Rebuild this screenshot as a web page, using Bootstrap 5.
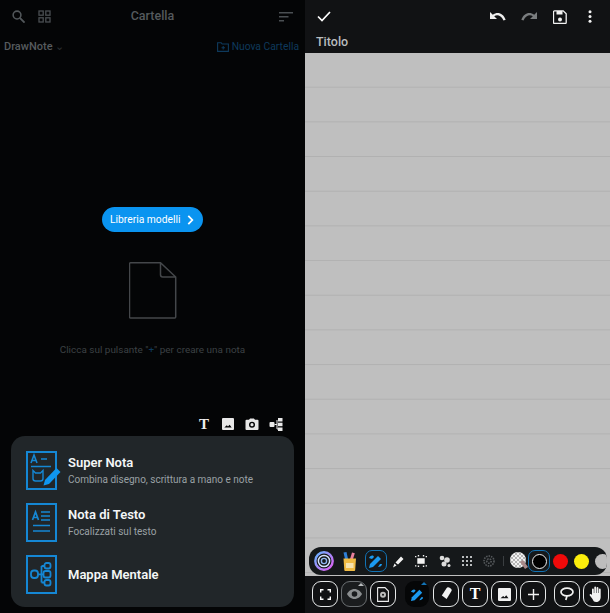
<!DOCTYPE html>
<html lang="it">
<head>
    <meta charset="UTF-8">
    <meta name="viewport" content="width=device-width, initial-scale=1.0">
    <title>DrawNote</title>
    <link href="https://cdn.jsdelivr.net/npm/bootstrap@5.3.3/dist/css/bootstrap.min.css" rel="stylesheet">
    <script src="https://cdn.jsdelivr.net/npm/bootstrap@5.3.3/dist/js/bootstrap.bundle.min.js"></script>
    <style>
        html, body { height: 613px; overflow: hidden; background: #040506; }
        body { font-family: Roboto, "Liberation Sans", sans-serif; }
        svg { display: block; flex: none; }

        .app { width: 610px; height: 613px; }
        .pane { width: 305px; height: 613px; }

        /* left: note list, dimmed */
        .list-pane { background: #040506; }
        .list-head { height: 33px; padding: 0 12px; }
        .list-side { flex: 1 1 0; gap: 13px; }
        .list-title { font-size: 12.5px; font-weight: 500; color: #555a5d; }
        .list-sub { height: 22px; padding: 0 6px 0 4px; margin-top: 3px; font-size: 10.3px; }
        .crumb { color: #565b5e; font-weight: 500; font-size: 11px; }
        .crumb-arrow { color: #2c3033; }
        .new-folder { color: #0e3a5c; gap: 3px; }
        .empty-box { flex: 1 1 auto; padding-top: 149px; }
        .templates-btn { width: 101px; height: 25px; border-radius: 13px; background: #0a94f0; color: #fff; font-size: 10.3px; border: 0; padding: 0 0 0 8px; gap: 6px; }
        .doc-icon { margin-top: 30px; }
        .hint { margin-top: 24px; font-size: 9.95px; color: #3c4144; height: 14px; }
        .hint b { color: #0e3a5c; font-weight: 400; }
        .quick-row { height: 24px; padding-right: 21px; gap: 8px; }
        .quick-t { width: 16px; font: 700 15px/16px "Liberation Serif", serif; color: #eee; text-align: center; }
        .new-card { margin: 0 11px 6px; height: 171px; background: #212629; border-radius: 14px; padding: 16px 0 0 15px; }
        .new-item { height: 38px; margin-bottom: 14px; gap: 6px; color: #fff; }
        .new-name { font-size: 13px; font-weight: 600; line-height: 16px; color: #f4f6f7; }
        .new-desc { font-size: 10px; line-height: 14px; margin-top: 2px; color: #9aa1a5; }

        /* right: canvas */
        .edit-pane { background: #111214; }
        .edit-head { height: 33px; padding: 0 18px 0 12px; }
        .edit-actions { gap: 15px; }
        .save-icon { margin-left: 1px; }
        .more-icon { margin-left: 6px; }
        .edit-title { height: 20px; padding-left: 11px; font-size: 12.5px; font-weight: 500; line-height: 18px; color: #b9bcbe; }
        .paper { flex: 1 1 auto; background-color: #bfbfbf; background-image: linear-gradient(to bottom, #bfbfbf 34px, #b1b1b1 34px, #b1b1b1 35px, #bfbfbf 35px); background-size: 100% 34.68px; padding: 0 3px 1px 4px; }
        .tool-pill { height: 28px; background: #15181a; border-radius: 12px; overflow: hidden; padding-left: 4px; }
        .slot { width: 22px; height: 22px; flex: none; }
        .slot-on { border: 1px solid #1273b5; border-radius: 7px; }
        .slot-target { margin-right: 3px; }
        .slot-cup { margin-right: 5px; }
        .slot-bump1 { margin-left: 1px; }
        .slot-bump2 { margin-left: 2px; }
        .slot-palette { margin: 0 -2px 0 1px; }
        .swatch-slot { width: 21px; flex: none; }
        .swatch { width: 15px; height: 15px; border-radius: 50%; flex: none; }
        .swatch-black { background: #000; border: 1.5px solid #eee; }
        .swatch-red { background: #f00a0a; }
        .swatch-yellow { background: #fcee0c; }
        .swatch-grey { background: #bdbdbd; }
        .sep { width: 1px; height: 10px; margin: 0 3px; background: #3a3e41; flex: none; }
        .bottom-bar { height: 37px; padding: 5px 0 0 7px; gap: 3px; }
        .key { position: relative; width: 26px; height: 26px; flex: none; border: 1px solid #e6e8e9; border-radius: 9px; background: #111214; }
        .key-dim { border-color: #6b6f72; background: #1a1c1e; }
        .key-on { border: 0; background: #050607; width: 24px; margin: 0 1px 0 6px; }
        .key-more::after { content: ""; position: absolute; top: 1px; right: 2px; border-left: 3px solid transparent; border-right: 3px solid transparent; border-bottom: 3px solid #b9bcbe; }
        .key-on.key-more::after { border-bottom-color: #1273b5; }
        .key-t { font: 700 16px/16px "Liberation Serif", serif; color: #fff; }
        .key-gap { margin-left: 5px; }
    </style>
</head>
<body>

<div class="app d-flex">

    <!-- note list -->
    <div class="pane list-pane d-flex flex-column">
        <div class="list-head d-flex align-items-center">
            <div class="list-side d-flex align-items-center">
                <svg width="13" height="13" viewBox="0 0 15 15" fill="none" stroke="#52575a" stroke-width="1.800"><circle cx="5.800" cy="5.800" r="4.500"/><path d="M9 9l5.500 5.500" stroke-width="2.200"/></svg>
                <svg width="13" height="13" viewBox="0 0 13 13" fill="none" stroke="#4a4f52" stroke-width="1.300"><rect x="1" y="1" width="4.200" height="4.200"/><rect x="7.800" y="1" width="4.200" height="4.200"/><rect x="1" y="7.800" width="4.200" height="4.200"/><rect x="7.800" y="7.800" width="4.200" height="4.200"/></svg>
            </div>
            <div class="list-title text-center">Cartella</div>
            <div class="list-side d-flex justify-content-end">
                <svg width="14" height="10" viewBox="0 0 14 10" fill="#4a4f52"><rect width="14" height="1.500"/><rect y="4" width="9.500" height="1.500"/><rect y="8" width="5" height="1.500"/></svg>
            </div>
        </div>
        <div class="list-sub d-flex align-items-center justify-content-between">
            <span class="crumb">DrawNote <span class="crumb-arrow">&#8964;</span></span>
            <span class="new-folder d-flex align-items-center">
                <svg width="12" height="10" viewBox="0 0 12 10" fill="none" stroke="#0e3a5c" stroke-width="1.100"><path d="M.6.800h3.600l1 1.200h6.200v7.400H.6zM4.500 5.700h3.500M6.200 4v3.400"/></svg>
                Nuova Cartella
            </span>
        </div>

        <div class="empty-box d-flex flex-column align-items-center">
            <button type="button" class="templates-btn d-flex align-items-center">
                Libreria modelli
                <svg width="7" height="10" viewBox="0 0 7 10" fill="none" stroke="#fff" stroke-width="1.800"><path d="M1.300 .8l4 4.200-4 4.200"/></svg>
            </button>
            <svg class="doc-icon" width="48" height="57" viewBox="0 0 48 57" fill="none" stroke="#44474a" stroke-width="1.500"><path d="M1.500.8h30L46.700 15v40a1 1 0 0 1-1 1H1.500a1 1 0 0 1-1-1V1.800a1 1 0 0 1 1-1zM31.500 .8v12a2.200 2.200 0 0 0 2.200 2.200h13"/></svg>
            <div class="hint">Clicca sul pulsante "<b>+</b>" per creare una nota</div>
        </div>

        <div class="quick-row d-flex align-items-center justify-content-end">
            <span class="quick-t">T</span>
            <svg width="16" height="12" viewBox="0 0 12 12" fill="#e8e8e8"><path d="M1 0h10a1 1 0 0 1 1 1v10a1 1 0 0 1-1 1H1a1 1 0 0 1-1-1V1a1 1 0 0 1 1-1zM2.300 9.500h7.400L7.600 6.800 6 8.600 4.800 7.300z" fill-rule="evenodd"/></svg>
            <svg width="16" height="12" viewBox="0 0 13 12" fill="#e8e8e8"><path d="M1 1.800h2.500L4.600 .4h3.800l1.100 1.400H12a1 1 0 0 1 1 1V11a1 1 0 0 1-1 1H1a1 1 0 0 1-1-1V2.800a1 1 0 0 1 1-1zM6.500 3.700a3 3 0 1 0 0 6 3 3 0 0 0 0-6zm0 1.400a1.600 1.600 0 1 1 0 3.200 1.600 1.600 0 0 1 0-3.200z" fill-rule="evenodd"/></svg>
            <svg width="16" height="13" viewBox="0 0 13 13" fill="#e8e8e8"><rect x="0" y="4" width="5" height="5" rx="1"/><rect x="8.500" y="0" width="4.500" height="3.500"/><rect x="8.500" y="4.700" width="4.500" height="3.500"/><rect x="8.500" y="9.500" width="4.500" height="3.500"/><path d="M5 6.500h2.500M7.500 2v9h1" stroke="#e8e8e8" fill="none"/></svg>
        </div>

        <div class="new-card">
            <div class="new-item d-flex align-items-center">
                <svg width="36" height="40" viewBox="0 0 36 40" fill="none" stroke="#1587d4"><rect x="1" y="1" width="29" height="37" stroke-width="2"/><path d="M5 12l3-8 3 8M6 9.500h4M15 8h6M5 15.500h20" stroke-width="1.600"/><path d="M7 19.500l2.500 2.500h5l2.500-2.500v8a2.500 2.500 0 0 1-2.500 2.500h-5A2.500 2.500 0 0 1 7 27.500z" stroke-width="1.400"/><path d="M19 29l11.500-12 4 4L23 33l-5.500 1.500z" fill="#0f96f0" stroke="none"/></svg>
                <div>
                    <div class="new-name">Super Nota</div>
                    <div class="new-desc">Combina disegno, scrittura a mano e note</div>
                </div>
            </div>
            <div class="new-item d-flex align-items-center">
                <svg width="36" height="40" viewBox="0 0 36 40" fill="none" stroke="#1587d4"><rect x="1" y="1" width="29" height="37" stroke-width="2"/><path d="M6.500 17l3-8 3 8M7.500 14.500h4M15 9h9M15 13h9M15 17h9M7 22.500h17M7 28h17" stroke-width="1.700"/></svg>
                <div>
                    <div class="new-name">Nota di Testo</div>
                    <div class="new-desc">Focalizzati sul testo</div>
                </div>
            </div>
            <div class="new-item d-flex align-items-center">
                <svg width="36" height="40" viewBox="0 0 36 40" fill="none" stroke="#1587d4"><rect x="1" y="1" width="29" height="37" stroke-width="2"/><g stroke-width="1.800"><rect x="5" y="15.500" width="7" height="7.500" rx="3"/><rect x="18.500" y="8" width="6" height="5.500" rx="2"/><rect x="17.500" y="16" width="7" height="6.500" rx="2"/><rect x="18.500" y="25" width="6" height="5.500" rx="2"/><path d="M12 19.300h5.500M15.500 11h3M15.500 27.500h3M15.500 11v16.500"/></g></svg>
                <div class="new-name">Mappa Mentale</div>
            </div>
        </div>
    </div>

    <!-- canvas -->
    <div class="pane edit-pane d-flex flex-column">
        <div class="edit-head d-flex align-items-center justify-content-between">
            <svg width="14" height="11" viewBox="0 0 14 11" fill="none" stroke="#fff" stroke-width="1.700"><path d="M1 5.500l4 4 8-8.500"/></svg>
            <div class="edit-actions d-flex align-items-center">
                <svg width="16" height="9" viewBox="0 0 16 9" fill="#eee"><path d="M0 0v7h7L4.200 4.300C6.800 2.400 11 3 13.500 8.500l2.200-.8C13 .4 7 -.6 2.800 2.800z"/></svg>
                <svg width="16" height="9" viewBox="0 0 16 9" fill="#7a7d7f"><path d="M16 0v7H9l2.800-2.700C9.200 2.400 5 3 2.500 8.500L.3 7.700C3 .4 9-.6 13.200 2.800z"/></svg>
                <svg class="save-icon" width="14" height="14" viewBox="0 0 14 14" fill="none"><path d="M1.500.8h8.700l3 3v8.700a1 1 0 0 1-1 1H1.500a1 1 0 0 1-1-1V1.800a1 1 0 0 1 1-1z" stroke="#f2f2f2" stroke-width="1.300"/><rect x="3.500" y="1" width="6" height="3.500" fill="#f2f2f2"/><circle cx="7" cy="9.500" r="2" fill="#f2f2f2"/></svg>
                <svg class="more-icon" width="4" height="13" viewBox="0 0 4 13" fill="#f2f2f2"><circle cx="2" cy="1.800" r="1.500"/><circle cx="2" cy="6.500" r="1.500"/><circle cx="2" cy="11.200" r="1.500"/></svg>
            </div>
        </div>
        <div class="edit-title">Titolo</div>

        <div class="paper d-flex flex-column justify-content-end">
            <div class="tool-pill d-flex align-items-center">
                <span class="slot slot-target"><svg width="22" height="22" viewBox="0 0 22 22" fill="none"><defs><linearGradient id="ringGrad" x1="0" y1="0" x2="1" y2="1"><stop offset="0" stop-color="#62b4ff"/><stop offset="1" stop-color="#e45cf0"/></linearGradient></defs><circle cx="11" cy="11" r="8.700" stroke="url(#ringGrad)" stroke-width="2.400"/><circle cx="11" cy="11" r="5.600" stroke="#d4e2fb" stroke-width="1.500"/><circle cx="11" cy="11" r="2.600" stroke="#8fb4ee" stroke-width="1.400"/></svg></span>
                <span class="slot slot-cup"><svg width="22" height="22" viewBox="0 0 22 22"><path d="M7 9L5.500 2.500 8.500 2l1.500 7z" fill="#2f7fd6"/><path d="M12 9l2-6.500 2.800.8L15 9z" fill="#e87f9c"/><path d="M5.500 8.500h12.500l-.8 11.500a1 1 0 0 1-1 1H7.300a1 1 0 0 1-1-1z" fill="#f0bb45"/><rect x="8" y="13" width="7.500" height="5" fill="#f6e3b0"/></svg></span>
                <span class="slot slot-on d-flex align-items-center justify-content-center"><svg width="16" height="16" viewBox="0 0 16 16" fill="#1b9af0"><path d="M2 11l8-8 3 3-8 8-4 1z"/><path d="M1 5c2-3 4-3 5-1l-2 2zM10 14c2 0 4-1 4-3l-2 0z"/></svg></span>
                <span class="slot d-flex align-items-center justify-content-center"><svg width="12" height="13" viewBox="0 0 12 13" fill="#f2f2f2"><path d="M3.500 7.500L9 1.500l2.500 2.500-5.500 5.500zM2.500 8.500l2 2-3.500 2z"/></svg></span>
                <span class="slot slot-bump1 d-flex align-items-center justify-content-center"><svg width="12" height="12" viewBox="0 0 13 13" fill="#f2f2f2"><rect x="2.500" y="3.500" width="8" height="6"/><path d="M0 1h1.500v1.500H0zM3 0h1.500v1.500H3zM8.500 0H10v1.500H8.500zM11.500 1H13v1.500h-1.500zM0 11h1.500v1.500H0zM3 11.500h1.500V13H3zM8.500 11.500H10V13H8.500zM11.500 11H13v1.500h-1.500z"/></svg></span>
                <span class="slot slot-bump2 d-flex align-items-center justify-content-center"><svg width="12" height="13" viewBox="0 0 12 13" fill="#dcdcdc"><circle cx="3" cy="3" r="2.300"/><circle cx="8" cy="5" r="2.800"/><circle cx="5" cy="9" r="2.500"/><circle cx="10" cy="10.500" r="1.500"/></svg></span>
                <span class="slot d-flex align-items-center justify-content-center"><svg width="10" height="10" viewBox="0 0 10 10" fill="#b9bcbe"><path d="M0 0h2v2H0zM4 0h2v2H4zM8 0h2v2H8zM0 4h2v2H0zM4 4h2v2H4zM8 4h2v2H8zM0 8h2v2H0zM4 8h2v2H4zM8 8h2v2H8z"/></svg></span>
                <span class="slot d-flex align-items-center justify-content-center"><svg width="12" height="12" viewBox="0 0 12 12" fill="none" stroke="#55595c" stroke-width="1.600" stroke-dasharray="1.500 1"><circle cx="6" cy="6" r="5"/><circle cx="6" cy="6" r="2.200"/></svg></span>
                <span class="sep"></span>
                <span class="slot slot-palette d-flex align-items-center justify-content-center"><svg width="20" height="20" viewBox="0 0 20 20"><defs><pattern id="chk" width="4" height="4" patternUnits="userSpaceOnUse"><rect width="4" height="4" fill="#f2f2f2"/><rect width="2" height="2" fill="#b5b5b5"/><rect x="2" y="2" width="2" height="2" fill="#b5b5b5"/></pattern></defs><circle cx="9" cy="9" r="8" fill="url(#chk)"/><path d="M11 11l5 7 3-2-5-7z" fill="#a8898a"/></svg></span>
                <span class="slot slot-on d-flex align-items-center justify-content-center"><span class="swatch swatch-black"></span></span>
                <span class="swatch-slot d-flex justify-content-center"><span class="swatch swatch-red"></span></span>
                <span class="swatch-slot d-flex justify-content-center"><span class="swatch swatch-yellow"></span></span>
                <span class="swatch-slot d-flex justify-content-center"><span class="swatch swatch-grey"></span></span>
            </div>
        </div>

        <div class="bottom-bar d-flex">
            <div class="key d-flex align-items-center justify-content-center"><svg width="11" height="11" viewBox="0 0 11 11" fill="none" stroke="#fff" stroke-width="1.400"><path d="M.7 3.500V.7h2.800M7.500 .7h2.800v2.800M.7 7.500v2.800h2.800M10.300 7.500v2.800H7.500"/></svg></div>
            <div class="key key-dim key-more d-flex align-items-center justify-content-center"><svg width="15" height="10" viewBox="0 0 15 10" fill="#8b8e90"><path d="M7.500 0C11 0 13.700 2.500 15 5c-1.300 2.500-4 5-7.500 5S1.300 7.500 0 5c1.300-2.500 4-5 7.500-5zm0 2.200a2.800 2.800 0 1 0 0 5.600 2.800 2.800 0 0 0 0-5.600z" fill-rule="evenodd"/></svg></div>
            <div class="key d-flex align-items-center justify-content-center"><svg width="12" height="15" viewBox="0 0 12 15" fill="none"><path d="M1 .6h7L11.400 4v10.400H.6V1z" stroke="#eee" stroke-width="1.100"/><circle cx="6" cy="7.800" r="3" fill="#bcbcbc"/><circle cx="6" cy="7.800" r="1" fill="#111214"/></svg></div>
            <div class="key key-on key-more d-flex align-items-center justify-content-center"><svg width="15" height="15" viewBox="0 0 16 16" fill="#1b9af0"><path d="M2 11l8-8 3 3-8 8-4 1z"/><path d="M1 5c2-3 4-3 5-1l-2 2zM10 14c2 0 4-1 4-3l-2 0z"/></svg></div>
            <div class="key d-flex align-items-center justify-content-center"><svg width="11" height="14" viewBox="0 0 11 14" fill="#f2f2f2"><path d="M.8 8.500L5.500 1.200a2 2 0 0 1 2.700-.6l1.500 1a2 2 0 0 1 .6 2.700L5.600 12z"/></svg></div>
            <div class="key key-t d-flex align-items-center justify-content-center">T</div>
            <div class="key d-flex align-items-center justify-content-center"><svg width="13" height="13" viewBox="0 0 12 12" fill="#f2f2f2"><path d="M1 0h10a1 1 0 0 1 1 1v10a1 1 0 0 1-1 1H1a1 1 0 0 1-1-1V1a1 1 0 0 1 1-1zM2.300 9.500h7.400L7.600 6.800 6 8.600 4.800 7.300z" fill-rule="evenodd"/></svg></div>
            <div class="key d-flex align-items-center justify-content-center"><svg width="11" height="11" viewBox="0 0 11 11" stroke="#f2f2f2" stroke-width="1.400"><path d="M5.500 0v11M0 5.500h11"/></svg></div>
            <div class="key key-gap d-flex align-items-center justify-content-center"><svg width="14" height="14" viewBox="0 0 14 14" fill="none" stroke="#f2f2f2" stroke-width="1.700"><ellipse cx="7" cy="5" rx="6" ry="3.800"/><path d="M7 9l-1.200 4"/></svg></div>
            <div class="key d-flex align-items-center justify-content-center"><svg width="15" height="16" viewBox="0 0 15 16" fill="#f2f2f2"><path d="M3 9V3.500a.9.900 0 0 1 1.800 0V7h.5V1.500a.9.900 0 0 1 1.800 0V7h.5V2a.9.900 0 0 1 1.800 0v5h.5V3.500a.9.900 0 0 1 1.800 0V11c0 3-2 5-4.500 5S4.500 15 3.500 13L.8 9.500c-.7-1 .6-2 1.400-1.200z"/></svg></div>
        </div>
    </div>
</div>

</body>
</html>
